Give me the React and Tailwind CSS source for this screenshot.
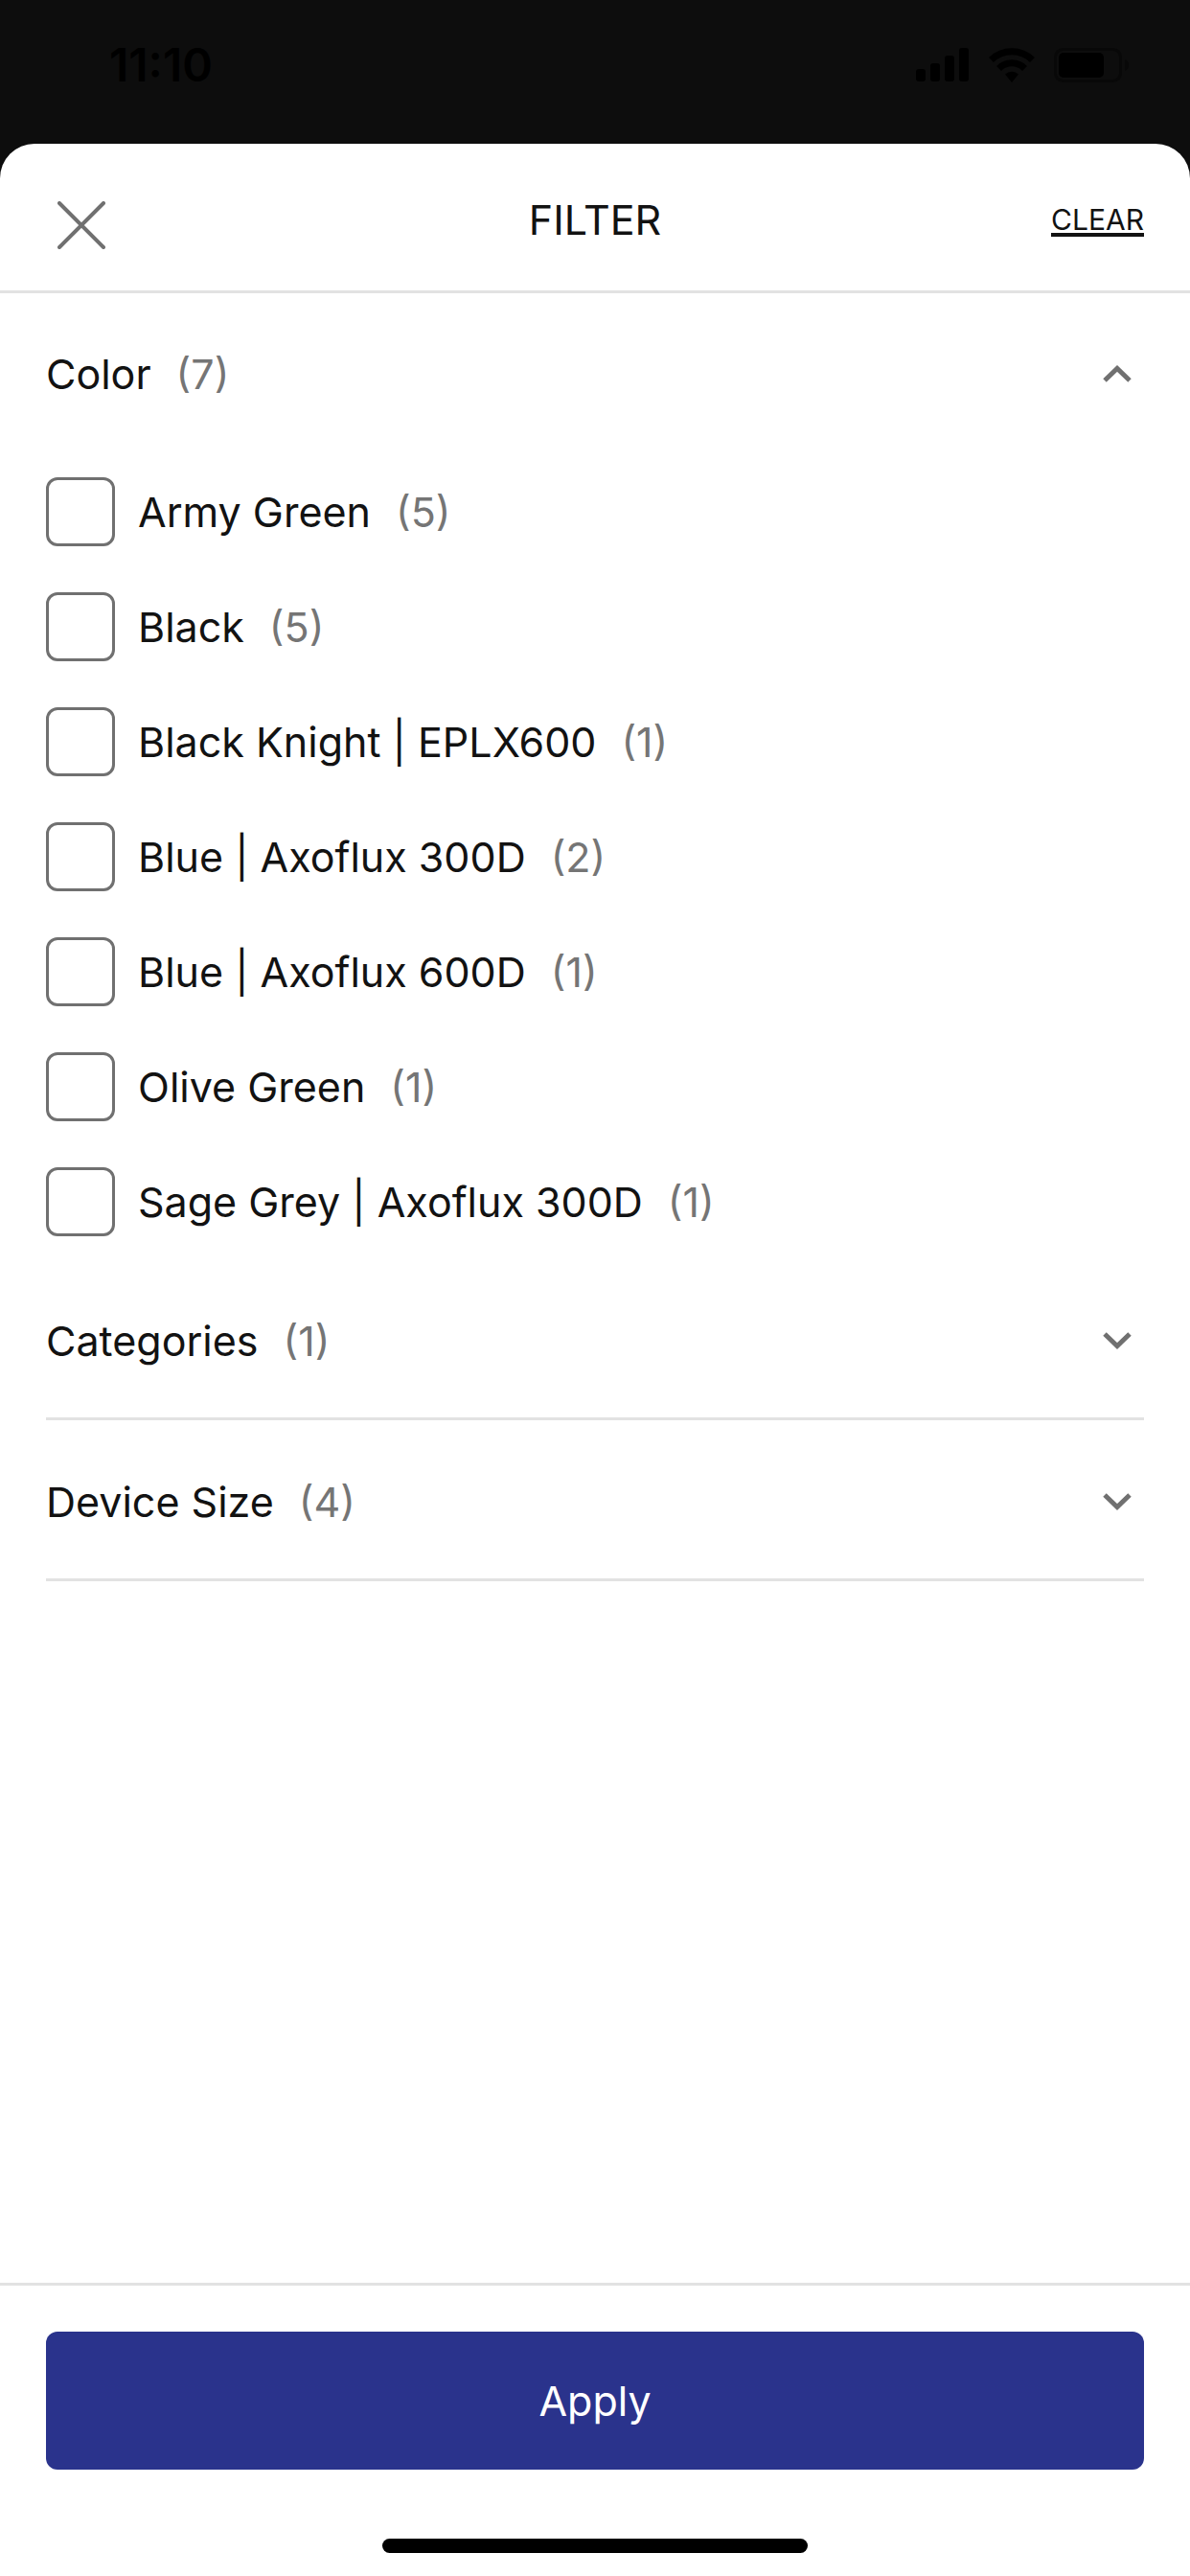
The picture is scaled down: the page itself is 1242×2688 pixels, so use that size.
import { useState } from "react";

const sections = [
  {
    name: "Color",
    options: [
      { label: "Army Green", count: 5 },
      { label: "Black", count: 5 },
      { label: "Black Knight | EPLX600", count: 1 },
      { label: "Blue | Axoflux 300D", count: 2 },
      { label: "Blue | Axoflux 600D", count: 1 },
      { label: "Olive Green", count: 1 },
      { label: "Sage Grey | Axoflux 300D", count: 1 },
    ],
    total: 7,
  },
  { name: "Categories", options: [], total: 1 },
  { name: "Device Size", options: [], total: 4 },
];

const StatusBar = () => (
  <div className="flex h-[150px] items-start justify-between pt-10 pr-16 pl-[114px] text-black">
    <span className="text-[48px] leading-[56px] font-semibold">11:10</span>
    <div className="flex h-14 items-center gap-5">
      <svg className="h-9 w-14" viewBox="0 0 56 36" fill="currentColor" aria-hidden="true">
        <rect x="0" y="22" width="10" height="13" rx="3" />
        <rect x="15" y="16" width="10" height="19" rx="3" />
        <rect x="30" y="8" width="10" height="27" rx="3" />
        <rect x="45" y="0" width="10" height="35" rx="3" />
      </svg>
      <svg className="h-9 w-12" viewBox="0 0 48 36" fill="none" stroke="currentColor" strokeWidth="7" aria-hidden="true">
        <path d="M2.5 12.5a30.500 30.500 0 0 1 43 0" />
        <path d="M10.500 21.500a19 19 0 0 1 27 0" />
        <path d="M24 36l-7-8.500a10 10 0 0 1 14 0z" fill="currentColor" stroke="none" />
      </svg>
      <svg className="h-9 w-[78px]" viewBox="0 0 78 36" fill="none" aria-hidden="true">
        <rect x="1.500" y="1.500" width="68" height="33" rx="8" stroke="#080808" strokeWidth="3" />
        <rect x="5" y="5" width="47" height="26" rx="5" fill="currentColor" />
        <path d="M74 12c3 1 4 3 4 6s-1 5-4 6z" fill="#080808" />
      </svg>
    </div>
  </div>
);

const Option = ({ option, checked, onToggle }) => (
  <label className="flex h-[120px] items-center">
    <input
      type="checkbox"
      checked={checked}
      onChange={onToggle}
      className="size-[72px] shrink-0 appearance-none rounded-xl border-3 border-[#707070] bg-white checked:bg-[#2a338c]"
    />
    <span className="ml-6">{option.label}</span>
    <span className="ml-[26px] text-[#757575]">({option.count})</span>
  </label>
);

const Section = ({ section, open, onToggle, selected, onSelect }) => (
  <section className={open ? "" : "border-b-3 border-[#e2e2e2]"}>
    <h2>
      <button
        type="button"
        aria-expanded={open}
        onClick={onToggle}
        className={`flex w-full items-center pr-3 text-left ${open ? "h-[168px]" : "h-[165px] pt-1"}`}
      >
        <span>{section.name}</span>
        <span className="ml-[26px] text-[#757575]">({section.total})</span>
        <svg
          className={`ml-auto h-5 w-8 text-[#707070] ${open ? "rotate-180" : ""}`}
          viewBox="0 0 32 20"
          fill="none"
          stroke="currentColor"
          strokeWidth="5"
          aria-hidden="true"
        >
          <path d="M3 3l13 12.500L29 3" />
        </svg>
      </button>
    </h2>
    {open &&
      section.options.map((option) => (
        <Option
          key={option.label}
          option={option}
          checked={selected.includes(option.label)}
          onToggle={() => onSelect(option.label)}
        />
      ))}
  </section>
);

const App = () => {
  const [openSection, setOpenSection] = useState("Color");
  const [selected, setSelected] = useState([]);

  const toggleOption = (label) => {
    setSelected((prev) => (prev.includes(label) ? prev.filter((item) => item !== label) : [...prev, label]));
  };

  return (
    <div className="flex min-h-screen flex-col bg-[#0d0d0d] font-['Inter','Liberation_Sans',sans-serif] text-[43px] leading-[56px] text-[#121212]">
      <StatusBar />

      <div className="flex flex-1 flex-col rounded-t-[36px] bg-white">
        <header className="grid h-[156px] grid-cols-3 items-center border-b-3 border-[#e2e2e2] px-12">
          <button type="button" aria-label="Close" className="justify-self-start px-3 pt-7 pb-3">
            <svg
              className="size-[50px] text-[#707070]"
              viewBox="0 0 50 50"
              fill="none"
              stroke="currentColor"
              strokeWidth="4"
              strokeLinecap="round"
              aria-hidden="true"
            >
              <path d="M2 2l46 46M48 2L2 48" />
            </svg>
          </button>
          <h1 className="pt-1 text-center">FILTER</h1>
          <button
            type="button"
            onClick={() => setSelected([])}
            className="justify-self-end border-b-4 border-[#121212] pt-2 text-[30px] leading-7"
          >
            CLEAR
          </button>
        </header>

        <main className="flex-1 px-12">
          {sections.map((section) => (
            <Section
              key={section.name}
              section={section}
              open={openSection === section.name}
              onToggle={() => setOpenSection(openSection === section.name ? "" : section.name)}
              selected={selected}
              onSelect={toggleOption}
            />
          ))}
        </main>

        <footer className="border-t-3 border-[#e2e2e2] px-12 pt-12 pb-6">
          <button type="button" className="h-36 w-full rounded-xl bg-[#2a338c] text-white">
            Apply
          </button>
          <div className="mx-auto mt-[72px] h-[15px] w-[444px] rounded-full bg-black" />
        </footer>
      </div>
    </div>
  );
};

export default App;
